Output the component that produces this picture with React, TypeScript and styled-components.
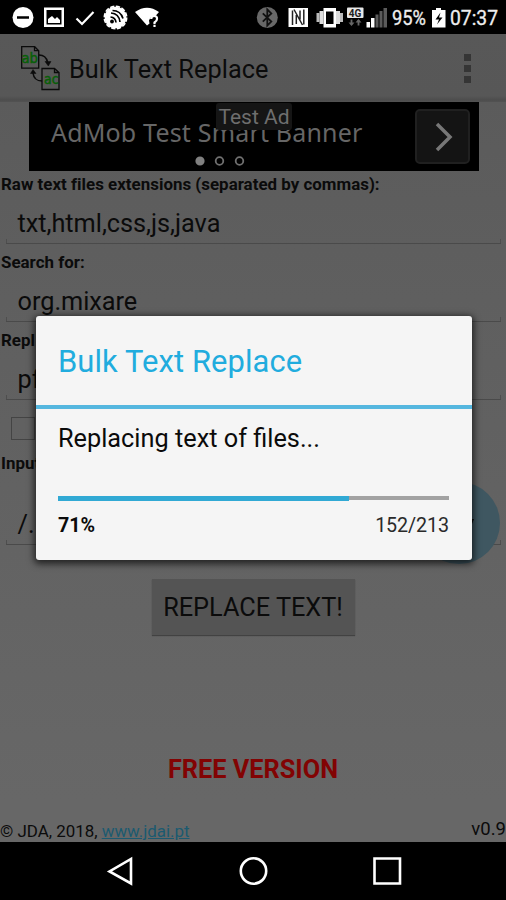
import React from 'react';
import styled, { createGlobalStyle } from 'styled-components';

const GlobalStyle = createGlobalStyle`
  * { box-sizing: border-box; }
  body { margin: 0; background: #000; }
`;

const Screen = styled.div`
  position: relative;
  display: flex;
  flex-direction: column;
  width: 506px;
  height: 900px;
  overflow: hidden;
  font-family: Roboto, "Noto Sans", sans-serif;
  color: #0b0b0b;
  background: linear-gradient(#5b5b5b 100px, #5f5f5f 300px, #676767 800px);
`;

const StatusBar = styled.header`
  height: 34px;
  flex: none;
  background: #000;
  svg { display: block; }
`;

const ActionBar = styled.div`
  display: flex;
  align-items: center;
  flex: none;
  height: 68px;
  padding: 0 34px 0 20px;
  background: linear-gradient(#585858 0, #575757 62px, #4d4d4d 66px, #525252 68px);
`;

const AppTitle = styled.h1`
  flex: 1;
  margin: 3px 0 0 8px;
  font-size: 25.3px;
  line-height: 34px;
  font-weight: 400;
  letter-spacing: 0.05px;
`;

const Overflow = styled.div`
  display: flex;
  flex-direction: column;
  gap: 4px;
  width: 7px;
  margin-right: 1px;
`;

const Dot = styled.i`
  height: 7px;
  background: #353535;
`;

const Banner = styled.section`
  position: relative;
  display: flex;
  align-items: center;
  justify-content: space-between;
  flex: none;
  width: 450px;
  height: 69px;
  margin-left: 29px;
  padding: 0 9px 0 22px;
  background: #000;
`;

const BannerText = styled.span`
  margin-top: -10px;
  font-family: "Noto Sans", sans-serif;
  font-size: 25px;
  letter-spacing: 0.18px;
  color: #666;
`;

const AdTag = styled.span`
  position: absolute;
  left: 187px;
  top: 1px;
  width: 76px;
  height: 27px;
  border-radius: 3px;
  background: #151515;
  color: #6e6e6e;
  font-size: 21px;
  line-height: 28px;
  text-align: center;
`;

const Pager = styled.svg`
  position: absolute;
  left: 165px;
  top: 52px;
`;

const BannerButton = styled.div`
  display: flex;
  align-items: center;
  justify-content: center;
  width: 55px;
  height: 55px;
  border: 2px solid #202020;
  border-radius: 5px;
  background: #141414;
`;

const Label = styled.label`
  height: 26px;
  padding-left: 1px;
  font-size: 16.9px;
  line-height: 26px;
  font-weight: 700;
  letter-spacing: 0.02px;
`;

const Field = styled.div<{ $height?: number }>`
  position: relative;
  display: flex;
  flex-direction: column;
  flex: none;
  height: ${p => p.$height ?? 78}px;
`;

const Input = styled.div`
  position: relative;
  display: flex;
  flex: 1;
  align-items: flex-end;
  margin: 0 5px 5px 6px;
  padding: 0 0 4px 11.5px;
  font-size: 25.3px;
  line-height: 31px;
  letter-spacing: -0.03px;
  border-bottom: 1.5px solid #4a4a4a;
  &::before, &::after {
    content: "";
    position: absolute;
    bottom: 0;
    width: 1px;
    height: 4px;
    background: #4e4e4e;
  }
  &::before { left: 0; }
  &::after { right: 0; }
`;

const CheckRow = styled.div`
  display: flex;
  align-items: center;
  flex: none;
  height: 45px;
  padding: 2px 0 0 11px;
`;

const CheckBox = styled.span`
  width: 24px;
  height: 23px;
  border: 1.5px solid #444;
`;

const BrowseButton = styled.div`
  position: absolute;
  left: 418px;
  top: 32px;
  display: flex;
  align-items: center;
  justify-content: center;
  width: 82px;
  height: 82px;
  border-radius: 50%;
  background: #3f5761;
`;

const ReplaceButton = styled.div`
  flex: none;
  align-self: center;
  width: 203px;
  height: 56px;
  margin-top: 29px;
  background: #545454;
  box-shadow: 0 1px 1px #424242;
  font-size: 25.3px;
  line-height: 57px;
  text-align: center;
`;

const Edition = styled.div`
  flex: none;
  margin-top: 119px;
  line-height: 32px;
  font-size: 25.3px;
  font-weight: 700;
  text-align: center;
  color: #820303;
`;

const Footer = styled.footer`
  display: flex;
  flex: 1;
  align-items: flex-end;
  justify-content: space-between;
  font-size: 16.9px;
  line-height: 22px;
`;

const Link = styled.span`
  color: #1b5a70;
  text-decoration: underline;
`;

const Version = styled.span`
  font-size: 18.5px;
  line-height: 26px;
`;

const NavBar = styled.nav`
  flex: none;
  height: 58px;
  background: #000;
`;

const Dialog = styled.section`
  position: absolute;
  left: 36px;
  top: 316px;
  width: 436px;
  height: 244px;
  border-radius: 3px;
  background: #f5f5f5;
  box-shadow: 0 2px 7px 2px rgba(0, 0, 0, .65);
`;

const DialogTitle = styled.h2`
  margin: 0;
  height: 93px;
  padding-left: 22px;
  font-size: 30.9px;
  line-height: 91px;
  font-weight: 400;
  letter-spacing: 0.1px;
  color: #21acde;
  border-bottom: 4px solid #55b7df;
`;

const DialogBody = styled.div`
  padding: 12px 23px 0 22px;
`;

const Message = styled.p`
  margin: 0;
  font-size: 25.3px;
  line-height: 36px;
  white-space: nowrap;
`;

const Track = styled.div`
  display: flex;
  align-items: center;
  height: 4px;
  margin-top: 39px;
  background: #a2a2a2;
`;

const Fill = styled.div`
  height: 5px;
  background: #31a9d4;
`;

const Counts = styled.div`
  display: flex;
  justify-content: space-between;
  margin-top: 13px;
  font-size: 19.7px;
  line-height: 26px;
`;

const Amount = styled.span`
  color: #2a2a2a;
  letter-spacing: -0.1px;
`;

function StatusIcons() {
  return (
    <svg width="506" height="34" viewBox="0 0 506 34" fontFamily="Roboto, sans-serif">
      <circle cx="23" cy="17.500" r="10.500" fill="#fff" />
      <path d="M17 17.500h12" stroke="#000" strokeWidth="2.500" />
      <path d="M44 7.500h20v19.500h-20zM46.500 10v14.500h15v-14.500z" fill="#fff" fillRule="evenodd" />
      <path d="M48 23v-4l4-3 3 3 2-2 3 3v3z" fill="#fff" />
      <path d="M76.500 18.500l5.500 5.500 11.500-12" fill="none" stroke="#fff" strokeWidth="2.200" />
      <circle cx="115.500" cy="17.500" r="10.800" fill="#fff" />
      <circle cx="115.500" cy="17.500" r="11.200" fill="none" stroke="#fff" strokeWidth="1.600" strokeDasharray="4.300 1.564" />
      <g fill="none" stroke="#000" strokeWidth="1.700">
        <path d="M110.500 17q5 .5 5.500 5.500M111 13q8 .5 9 9M112.500 10.500q8 0 10.500 8" />
      </g>
      <circle cx="112" cy="21.500" r="1.900" fill="#000" />
      <path d="M135 12Q147 3.500 159 12l-4 4.500-4.500 1-1.500 3 .5 3-2.500 2z" fill="#fff" />
      <path d="M151.200 19q0-3 3-3t2.800 3q0 2-2.500 3.500v1.800M154.500 25v2" fill="none" stroke="#fff" strokeWidth="2.200" />
      <circle cx="267.300" cy="17.500" r="10.500" fill="#686868" />
      <path d="M262.800 13.300l8.500 8.300-4 3.900v-16l4 3.900-8.500 8.300" fill="none" stroke="#111" strokeWidth="1.800" />
      <path d="M288.500 8h19.500v19h-19.500z" fill="#fff" />
      <path d="M292.500 25v-14.500M303.800 9.500v15M294 9.500l8.500 15.500M296.300 15v9M300 10.500v9" fill="none" stroke="#222" strokeWidth="1.500" />
      <path d="M323.500 8h12.500v19.500h-12.500zM326 11.500v12.500h7.500v-12.500z" fill="#fff" fillRule="evenodd" />
      <path d="M321.500 11v13M338 11v13" stroke="#ddd" strokeWidth="4" />
      <path d="M318 13v9M341.500 13v9" stroke="#bbb" strokeWidth="3" />
      <rect x="347" y="7.500" width="16.500" height="10.500" rx="1" fill="#e8e8e8" />
      <text x="348.800" y="16.500" fontSize="10" fontWeight="700" fill="#222">4G</text>
      <path d="M351.500 19.500v5M358.500 20v5.500" stroke="#666" strokeWidth="1.800" />
      <path d="M348.500 22.500l3 3.500 3-3.500zM355.500 22.500l3-3.500 3 3.500z" fill="#666" />
      <path d="M366.500 22h3.500v5.500h-3.500zM371 18h3.500v9.500h-3.500z" fill="#fff" />
      <path d="M375.500 14.500h3v13h-3zM379.500 11h3v16.500h-3zM383.500 8h3.500v19.500h-3.500z" fill="#5b5b5b" />
      <text x="392" y="25" fontSize="19.500" fill="#eee" stroke="#eee" strokeWidth=".3" textLength="34" lengthAdjust="spacingAndGlyphs">95%</text>
      <path d="M436 8h5v2h4.500v17.500h-13.500v-17.500h4z" fill="#fff" />
      <path d="M440.500 12.500l-5 7h3.500l-2 5 5.500-7h-3.500z" fill="#000" />
      <text x="450" y="25" fontSize="20" fill="#eee" stroke="#eee" strokeWidth=".3" textLength="48" lengthAdjust="spacingAndGlyphs">07:37</text>
    </svg>
  );
}

function AppIcon() {
  return (
    <svg width="41" height="46" viewBox="0 0 41 46" fill="none" stroke="#0b0b0b" fontFamily="DejaVu Sans, sans-serif">
      <path d="M1.700 1.700h13l4 4v17.500h-17zM14.500 1.700v4h4M22 23.500h12.500l4.500 4v17h-17zM34.500 23.500v4h4" strokeWidth="1.300" />
      <path d="M19 10q7 0 8.500 7M22 36q-8 0-9-8" strokeWidth="1.500" />
      <path d="M25 16.500h6l-2.700 4.500zM10.500 28.500h5.500l-3-4z" fill="#0b0b0b" strokeWidth=".5" />
      <text x="1.500" y="18" fontSize="13.500" fill="#075f07" stroke="#075f07" strokeWidth=".5" textLength="16.500" lengthAdjust="spacingAndGlyphs">ab</text>
      <text x="24" y="38.500" fontSize="13.500" fill="#075f07" stroke="#075f07" strokeWidth=".5" textLength="14.500" lengthAdjust="spacingAndGlyphs">ac</text>
    </svg>
  );
}

function TextField({ label, value }: { label: string; value: string }) {
  return (
    <Field>
      <Label>{label}</Label>
      <Input>{value}</Input>
    </Field>
  );
}

export default function App() {
  const done = 152;
  const total = 213;
  return (
    <Screen>
      <GlobalStyle />
      <StatusBar><StatusIcons /></StatusBar>
      <ActionBar>
        <AppIcon />
        <AppTitle>Bulk Text Replace</AppTitle>
        <Overflow><Dot /><Dot /><Dot /></Overflow>
      </ActionBar>
      <Banner>
        <BannerText>AdMob Test Smart Banner</BannerText>
        <BannerButton>
          <svg width="20" height="32" viewBox="0 0 20 32" fill="none" stroke="#777" strokeWidth="3.500">
            <path d="M4 3l13 13-13 13" />
          </svg>
        </BannerButton>
        <Pager width="52" height="14" fill="none" stroke="#707070" strokeWidth="1.800">
          <circle cx="6" cy="7" r="3.700" fill="#808080" stroke="#808080" />
          <circle cx="25.500" cy="7" r="3.800" />
          <circle cx="45.500" cy="7" r="3.800" />
        </Pager>
        <AdTag>Test Ad</AdTag>
      </Banner>
      <TextField label="Raw text files extensions (separated by commas):" value="txt,html,css,js,java" />
      <TextField label="Search for:" value="org.mixare" />
      <TextField label="Repl" value="pf" />
      <CheckRow><CheckBox /></CheckRow>
      <Field $height={100}>
        <Label>Input</Label>
        <Input>/.</Input>
        <BrowseButton>
          <svg width="30" height="14" viewBox="0 0 30 14"><path d="M0 3h30l-2 5H0z" fill="#0b0b0b" /></svg>
        </BrowseButton>
      </Field>
      <ReplaceButton>REPLACE TEXT!</ReplaceButton>
      <Edition>FREE VERSION</Edition>
      <Footer>
        <span>© JDA, 2018, <Link>www.jdai.pt</Link></span>
        <Version>v0.9</Version>
      </Footer>
      <NavBar>
        <svg width="506" height="58" fill="none" stroke="#fff" strokeWidth="2.600">
          <path d="M131 17v24.500l-21.500-12z" />
          <circle cx="253.500" cy="29" r="12.700" />
          <path d="M374.500 16.500h25.500v25h-25.500z" />
        </svg>
      </NavBar>
      <Dialog>
        <DialogTitle>Bulk Text Replace</DialogTitle>
        <DialogBody>
          <Message>Replacing text of files...</Message>
          <Track><Fill style={{ width: `${(done / total) * 100 + 3}%` }} /></Track>
          <Counts><b>71%</b><Amount>{done}/{total}</Amount></Counts>
        </DialogBody>
      </Dialog>
    </Screen>
  );
}
